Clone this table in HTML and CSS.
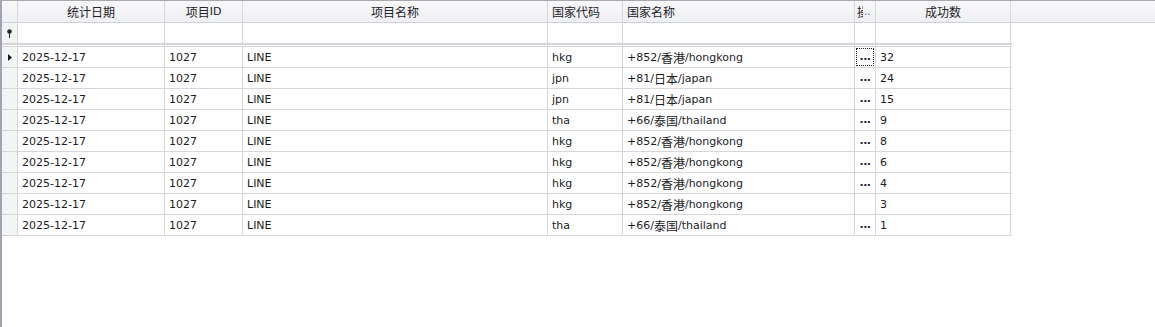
FILE: index.html
```html
<!DOCTYPE html>
<html lang="zh">
<head>
<meta charset="utf-8">
<title>统计</title>
<link rel="stylesheet" href="styles.css">
</head>
<body>
<div class="grid">
  <div class="row head">
    <div class="cell c0"></div>
    <div class="cell c1 center"><span class="cjk">统计日期</span></div>
    <div class="cell c2 center"><span class="cjk">项目</span>ID</div>
    <div class="cell c3 center"><span class="cjk">项目名称</span></div>
    <div class="cell c4"><span class="cjk">国家代码</span></div>
    <div class="cell c5"><span class="cjk">国家名称</span></div>
    <div class="cell c6 hcut"><span class="cjk clip">操</span><span class="dots">..</span></div>
    <div class="cell c7 center"><span class="cjk">成功数</span></div>
    <div class="cell fill"></div>
  </div>
  <div class="row filter">
    <div class="cell c0 ind">
      <svg width="7" height="9" viewBox="0 0 7 9"><circle cx="3.5" cy="2.5" r="2.3" fill="#2a2a2a"/><rect x="3" y="4" width="1" height="5" fill="#2a2a2a"/></svg>
    </div>
    <div class="cell c1"></div>
    <div class="cell c2"></div>
    <div class="cell c3"></div>
    <div class="cell c4"></div>
    <div class="cell c5"></div>
    <div class="cell c6"></div>
    <div class="cell c7"></div>
  </div>
  <div class="spacer"></div>
  <div class="body">
    <div class="row data">
      <div class="cell c0 ind"><svg width="4" height="7" viewBox="0 0 4 7"><polygon points="0,0 4,3.5 0,7" fill="#1a1a1a"/></svg></div>
      <div class="cell c1">2025-12-17</div><div class="cell c2">1027</div><div class="cell c3">LINE</div><div class="cell c4">hkg</div>
      <div class="cell c5">+852/<span class="cjk">香港</span>/hongkong</div><div class="cell c6 btn"><span class="focus">...</span></div><div class="cell c7">32</div>
    </div>
    <div class="row data">
      <div class="cell c0 ind"></div>
      <div class="cell c1">2025-12-17</div><div class="cell c2">1027</div><div class="cell c3">LINE</div><div class="cell c4">jpn</div>
      <div class="cell c5">+81/<span class="cjk">日本</span>/japan</div><div class="cell c6 btn"><span>...</span></div><div class="cell c7">24</div>
    </div>
    <div class="row data">
      <div class="cell c0 ind"></div>
      <div class="cell c1">2025-12-17</div><div class="cell c2">1027</div><div class="cell c3">LINE</div><div class="cell c4">jpn</div>
      <div class="cell c5">+81/<span class="cjk">日本</span>/japan</div><div class="cell c6 btn"><span>...</span></div><div class="cell c7">15</div>
    </div>
    <div class="row data">
      <div class="cell c0 ind"></div>
      <div class="cell c1">2025-12-17</div><div class="cell c2">1027</div><div class="cell c3">LINE</div><div class="cell c4">tha</div>
      <div class="cell c5">+66/<span class="cjk">泰国</span>/thailand</div><div class="cell c6 btn"><span>...</span></div><div class="cell c7">9</div>
    </div>
    <div class="row data">
      <div class="cell c0 ind"></div>
      <div class="cell c1">2025-12-17</div><div class="cell c2">1027</div><div class="cell c3">LINE</div><div class="cell c4">hkg</div>
      <div class="cell c5">+852/<span class="cjk">香港</span>/hongkong</div><div class="cell c6 btn"><span>...</span></div><div class="cell c7">8</div>
    </div>
    <div class="row data">
      <div class="cell c0 ind"></div>
      <div class="cell c1">2025-12-17</div><div class="cell c2">1027</div><div class="cell c3">LINE</div><div class="cell c4">hkg</div>
      <div class="cell c5">+852/<span class="cjk">香港</span>/hongkong</div><div class="cell c6 btn"><span>...</span></div><div class="cell c7">6</div>
    </div>
    <div class="row data">
      <div class="cell c0 ind"></div>
      <div class="cell c1">2025-12-17</div><div class="cell c2">1027</div><div class="cell c3">LINE</div><div class="cell c4">hkg</div>
      <div class="cell c5">+852/<span class="cjk">香港</span>/hongkong</div><div class="cell c6 btn"><span>...</span></div><div class="cell c7">4</div>
    </div>
    <div class="row data">
      <div class="cell c0 ind"></div>
      <div class="cell c1">2025-12-17</div><div class="cell c2">1027</div><div class="cell c3">LINE</div><div class="cell c4">hkg</div>
      <div class="cell c5">+852/<span class="cjk">香港</span>/hongkong</div><div class="cell c6 btn"></div><div class="cell c7">3</div>
    </div>
    <div class="row data">
      <div class="cell c0 ind"></div>
      <div class="cell c1">2025-12-17</div><div class="cell c2">1027</div><div class="cell c3">LINE</div><div class="cell c4">tha</div>
      <div class="cell c5">+66/<span class="cjk">泰国</span>/thailand</div><div class="cell c6 btn"><span>...</span></div><div class="cell c7">1</div>
    </div>
  </div>
</div>
</body>
</html>
```

FILE: styles.css
```css
html, body {
  margin: 0;
  padding: 0;
  background: #ffffff;
}
.grid {
  box-sizing: border-box;
  width: 1155px;
  height: 327px;
  border-left: 2px solid #a3a3b2;
  border-top: 1px solid #a8a8ae;
  font-family: "DejaVu Sans", "Noto Sans CJK SC", sans-serif;
  font-size: 11px;
  color: #1c1c24;
  overflow: hidden;
}
.cjk {
  font-family: "Noto Sans CJK SC", sans-serif;
  font-size: 12px;
}
.row {
  box-sizing: border-box;
  display: flex;
}
.cell {
  box-sizing: border-box;
  flex: none;
  border-right: 1px solid #d6d6dc;
  padding-left: 4px;
  white-space: nowrap;
  overflow: hidden;
  display: flex;
  align-items: center;
}
.center { justify-content: center; padding-left: 0; }
.c0 { width: 16px; padding-left: 0; justify-content: center; }
.c1 { width: 147px; }
.c2 { width: 78px; }
.c3 { width: 305px; }
.c4 { width: 75px; }
.c5 { width: 232px; }
.c6 { width: 21px; }
.c7 { width: 135px; }
.fill { flex: 1; border-right: none; }

.head {
  height: 22px;
  border-bottom: 1px solid #d0d0d6;
  background: linear-gradient(#f8f8fa, #eff0f3);
  color: #222228;
}
.head .cell { height: 21px; }
.hcut { padding-left: 2px; }
.clip {
  display: inline-block;
  width: 6px;
  overflow: hidden;
  white-space: nowrap;
  flex: none;
}
.dots {
  color: #3a5ab0;
  font-size: 10px;
  padding-left: 1px;
  flex: none;
}

.filter {
  height: 22px;
  width: 1010px;
  border-bottom: 2px solid #d3d3d8;
}
.filter .cell { height: 20px; }

.ind {
  background: #f3f4f6;
}

.spacer {
  height: 1px;
  width: 1010px;
}

.body {
  width: 1010px;
  border-top: 1px solid #d6d6dc;
}
.data {
  height: 21px;
  border-bottom: 1px solid #d6d6dc;
}
.data .cell { height: 20px; }

.btn {
  padding-left: 1px;
}
.btn span {
  box-sizing: border-box;
  display: flex;
  align-items: center;
  justify-content: center;
  width: 18px;
  height: 18px;
  padding-bottom: 2px;
  color: #1c1c40;
  font-weight: bold;
  letter-spacing: -0.5px;
}
.btn .focus {
  border: 1px dotted #222;
}
```
